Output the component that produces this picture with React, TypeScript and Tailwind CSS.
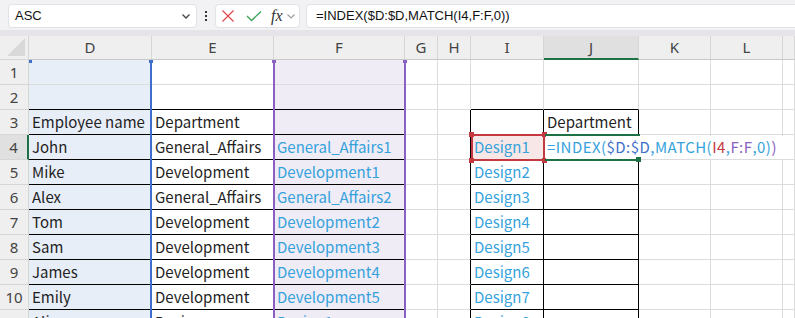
import React from "react";

const COLS = ["D", "E", "F", "G", "H", "I", "J", "K", "L", ""];

type Row = { n: number; d: string; e: string; f: string; i: string; j: string };

const ROWS: Row[] = [
  { n: 1, d: "", e: "", f: "", i: "", j: "" },
  { n: 2, d: "", e: "", f: "", i: "", j: "" },
  { n: 3, d: "Employee name", e: "Department", f: "", i: "", j: "Department" },
  { n: 4, d: "John", e: "General_Affairs", f: "General_Affairs1", i: "Design1", j: "" },
  { n: 5, d: "Mike", e: "Development", f: "Development1", i: "Design2", j: "" },
  { n: 6, d: "Alex", e: "General_Affairs", f: "General_Affairs2", i: "Design3", j: "" },
  { n: 7, d: "Tom", e: "Development", f: "Development2", i: "Design4", j: "" },
  { n: 8, d: "Sam", e: "Development", f: "Development3", i: "Design5", j: "" },
  { n: 9, d: "James", e: "Development", f: "Development4", i: "Design6", j: "" },
  { n: 10, d: "Emily", e: "Development", f: "Development5", i: "Design7", j: "" },
  { n: 11, d: "Alice", e: "Design", f: "Design1", i: "Design8", j: "" },
];

const CELL_FONT = "font-['Noto_Sans_CJK_JP','Noto_Sans',sans-serif]";

// which cells get the black table border
const blackBottom = (r: number, c: string) =>
  r >= 2 && ["D", "E", "F", "I", "J"].includes(c);
const blackRight = (r: number, c: string) =>
  r >= 3 && ["H", "I", "J"].includes(c);

function Cell({ r, c, text }: { r: number; c: string; text: string }) {
  const bg =
    c === "D"
      ? "bg-[#e8eef8]"
      : c === "F"
        ? "bg-[#efecf6]"
        : c === "I" && r === 4
          ? "bg-[#f8e7e7]"
          : "bg-white";
  const bb = blackBottom(r, c) ? "border-b-black" : "border-b-[#dcdcdc]";
  const br = blackRight(r, c) ? "border-r-black" : "border-r-[#dcdcdc]";
  const color = c === "F" || c === "I" ? "text-[#35a2dc]" : "text-[#1f1f1f]";
  return (
    <div
      className={`h-[25px] border-r border-b ${bb} ${br} ${bg} ${color} ${CELL_FONT} text-[15px] flex items-center pl-[3px] whitespace-nowrap overflow-hidden`}
    >
      {text}
    </div>
  );
}

export default function App() {
  return (
    <div className="w-[795px] h-[318px] overflow-hidden bg-white relative">
      {/* ── Formula bar ── */}
      <div className="h-[30px] bg-[#f2f1f4] flex items-start pt-[4px] pl-[8px] gap-[6px] font-['Liberation_Sans',Arial,sans-serif]">
        <div className="w-[189px] h-[24px] bg-white rounded-[4px] border border-[#e2e1e5] flex items-center justify-between pl-[6px] pr-[4px] text-[13px] text-[#111]">
          <span>ASC</span>
          <svg width="12" height="12" viewBox="0 0 12 12">
            <path d="M2.5 4.5 L6 8 L9.5 4.5" fill="none" stroke="#444" strokeWidth="1.3" />
          </svg>
        </div>
        <div className="w-[6px] h-[24px] flex flex-col items-center justify-center gap-[2px]">
          <span className="w-[2px] h-[2px] bg-[#333]" />
          <span className="w-[2px] h-[2px] bg-[#333]" />
          <span className="w-[2px] h-[2px] bg-[#333]" />
        </div>
        <div className="w-[85px] h-[24px] bg-white rounded-[4px] border border-[#e2e1e5] flex items-center pl-[5px]">
          <svg width="14" height="14" viewBox="0 0 14 14">
            <path d="M1.5 1.5 L12.5 12.5 M12.5 1.5 L1.5 12.5" stroke="#e2454a" strokeWidth="1.2" />
          </svg>
          <svg width="16" height="14" viewBox="0 0 16 14" className="ml-[11px]">
            <path d="M1 7 L5.5 11.5 L15 2.5" fill="none" stroke="#3aa35a" strokeWidth="1.3" />
          </svg>
          <span className="ml-[9px] font-['Liberation_Serif',serif] italic text-[16px] leading-none text-[#333]">
            fx
          </span>
          <svg width="10" height="10" viewBox="0 0 10 10" className="ml-[3px]">
            <path d="M1.5 3.5 L5 7 L8.5 3.5" fill="none" stroke="#999" strokeWidth="1.1" />
          </svg>
        </div>
        <div className="flex-1 h-[24px] bg-white rounded-l-[4px] border border-r-0 border-[#e2e1e5] flex items-center pl-[9px] text-[13px] text-[#111]">
          =INDEX($D:$D,MATCH(I4,F:F,0))
        </div>
      </div>
      <div className="h-[6px] bg-[#e6e4e9]" />

      {/* ── Grid ── */}
      <div className="relative">
        <div className="grid grid-cols-[29px_123px_122px_131px_33px_33px_73px_95px_72px_72px_1fr]">
          {/* corner */}
          <div className="h-[24px] bg-[#efefef] border-r border-b border-[#d6d6d6] relative">
            <svg width="18" height="18" viewBox="0 0 18 18" className="absolute right-[3px] bottom-[3px]">
              <path d="M18 0 L18 18 L0 18 Z" fill="#d9d9d9" />
            </svg>
          </div>
          {COLS.map((c) => (
            <div
              key={c || "m"}
              className={`h-[24px] border-r flex items-center justify-center font-['Noto_Sans',sans-serif] text-[15px] text-[#444] ${
                c === "J"
                  ? "bg-[#e0e0e0] border-r-[#d6d6d6] border-b-2 border-b-[#1e7145]"
                  : "bg-[#efefef] border-r-[#d6d6d6] border-b border-b-[#c8c8c8]"
              }`}
            >
              {c}
            </div>
          ))}

          {ROWS.map((row) => (
            <React.Fragment key={row.n}>
              <div
                className={`h-[25px] border-b border-[#d6d6d6] flex items-center justify-center font-['Noto_Sans',sans-serif] text-[15px] text-[#444] ${
                  row.n === 4
                    ? "bg-[#e0e0e0] border-r-2 border-r-[#1e7145]"
                    : "bg-[#efefef] border-r"
                }`}
              >
                {row.n}
              </div>
              <Cell r={row.n} c="D" text={row.d} />
              <Cell r={row.n} c="E" text={row.e} />
              <Cell r={row.n} c="F" text={row.f} />
              <Cell r={row.n} c="G" text="" />
              <Cell r={row.n} c="H" text="" />
              <Cell r={row.n} c="I" text={row.i} />
              <Cell r={row.n} c="J" text={row.j} />
              <Cell r={row.n} c="K" text="" />
              <Cell r={row.n} c="L" text="" />
              <Cell r={row.n} c="" text="" />
            </React.Fragment>
          ))}
        </div>

        {/* Range highlight: $D:$D */}
        <div className="absolute left-[150px] top-[24px] w-[2px] h-[300px] bg-[#3d6fcb]" />
        <div className="absolute left-[29px] top-[24px] w-[3px] h-[3px] bg-[#3d6fcb]" />
        <div className="absolute left-[149px] top-[24px] w-[4px] h-[3px] bg-[#3d6fcb]" />

        {/* Range highlight: F:F */}
        <div className="absolute left-[273px] top-[24px] w-[2px] h-[300px] bg-[#8a61c3]" />
        <div className="absolute left-[404px] top-[24px] w-[2px] h-[300px] bg-[#8a61c3]" />
        <div className="absolute left-[272px] top-[24px] w-[4px] h-[3px] bg-[#8a61c3]" />
        <div className="absolute left-[403px] top-[24px] w-[4px] h-[3px] bg-[#8a61c3]" />

        {/* Reference highlight: I4 */}
        <div className="absolute left-[471px] top-[98px] w-[74px] h-[27px] border-2 border-[#c4383f]" />
        <div className="absolute left-[469px] top-[96px] w-[5px] h-[5px] bg-[#c4383f]" />
        <div className="absolute left-[542px] top-[96px] w-[5px] h-[5px] bg-[#c4383f]" />
        <div className="absolute left-[469px] top-[122px] w-[5px] h-[5px] bg-[#c4383f]" />
        <div className="absolute left-[542px] top-[122px] w-[5px] h-[5px] bg-[#c4383f]" />

        {/* Active cell J4 in edit mode */}
        <div
          className={`absolute left-[546px] top-[100px] w-[238px] h-[23px] bg-white flex items-center pl-[1px] text-[15px] tracking-[0.45px] whitespace-nowrap ${CELL_FONT}`}
        >
          <span className="text-[#35a2dc]">=INDEX(</span>
          <span className="text-[#3d6fcb]">$D:$D</span>
          <span className="text-[#35a2dc]">,MATCH(</span>
          <span className="text-[#c4383f]">I4</span>
          <span className="text-[#35a2dc]">,</span>
          <span className="text-[#8a61c3]">F:F</span>
          <span className="text-[#35a2dc]">,0)</span>
          <span className="text-[#8a61c3]">)</span>
        </div>
        <div className="absolute left-[545px] top-[98px] w-[95px] h-[2px] bg-[#1e7145]" />
        <div className="absolute left-[545px] top-[123px] w-[91px] h-[2px] bg-[#1e7145]" />
        <div className="absolute left-[636px] top-[121px] w-[5px] h-[5px] bg-[#1e7145]" />
      </div>
    </div>
  );
}
